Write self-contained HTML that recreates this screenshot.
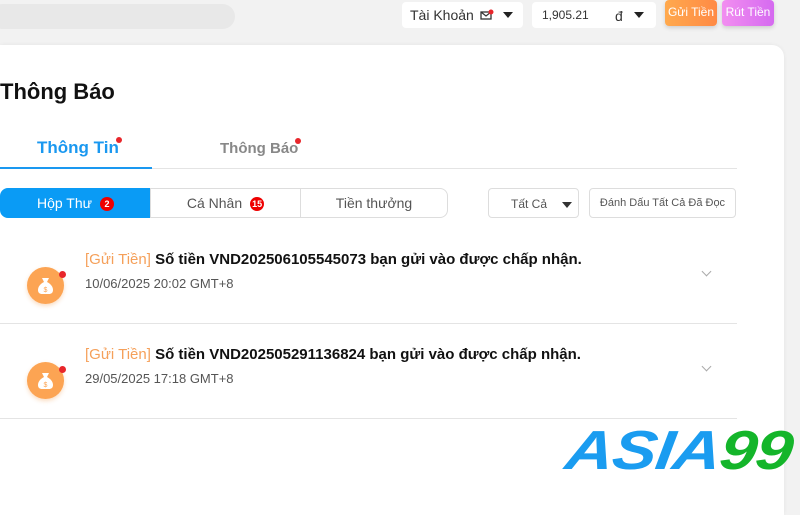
<!DOCTYPE html>
<html><head><meta charset="utf-8"><style>
*{margin:0;padding:0;box-sizing:border-box}
body{width:800px;height:500px;overflow:hidden;background:#f2f2f2;font-family:"Liberation Sans",sans-serif;position:relative;color:#222}
.abs{position:absolute}
.search{left:-10px;top:4px;width:245px;height:25px;border-radius:13px;background:#e8e8e8}
.box{background:#fff;border-radius:4px;height:26px;top:2px}
.btn{top:0;height:26px;border-radius:4px;color:#fff;font-size:12px;text-align:center;line-height:24px;box-shadow:0 2px 4px rgba(0,0,0,.15)}
.card{left:0;top:45px;width:784px;height:470px;background:#fff;border-top-right-radius:12px;box-shadow:0 0 4px rgba(0,0,0,.06)}
.tri{display:inline-block;width:0;height:0;border-left:5px solid transparent;border-right:5px solid transparent;border-top:6px solid #222}
.dot{width:6px;height:6px;border-radius:50%;background:#e8262b}
.seg{top:188px;height:30px;font-size:14px;line-height:29px;text-align:center;color:#555;border:1px solid #ddd}
.badge{display:inline-block;width:14px;height:14px;border-radius:50%;background:#e00;color:#fff;font-size:9px;line-height:14px;text-align:center;font-weight:bold;vertical-align:1px;margin-left:8px}
.row{left:0;width:737px;border-bottom:1px solid #e4e4e4}
.title{left:85px;font-size:15px;font-weight:bold;color:#111;white-space:nowrap;letter-spacing:0}
.title span{color:#f5a05a;font-weight:normal}
.date{left:85px;font-size:13px;color:#555}
.ic{left:27px;width:37px;height:37px;border-radius:50%;background:#fca453;box-shadow:0 2px 4px rgba(240,140,50,.3)}
.chev{left:703px;width:7px;height:7px;border-right:1px solid #aaa;border-bottom:1px solid #aaa;transform:rotate(45deg)}
</style></head><body>
<div class="abs search"></div>
<div class="abs box" style="left:402px;width:121px"><span class="abs" style="left:8px;top:5px;font-size:14px;color:#333">Tài Khoản</span>
<svg class="abs" style="left:78px;top:7px" width="14" height="12"><rect x="1" y="3" width="10" height="7" fill="none" stroke="#333" stroke-width="1.3"/><path d="M1 3l5 4 5-4" fill="none" stroke="#333" stroke-width="1.2"/><circle cx="11" cy="3" r="2.5" fill="#e8262b"/></svg>
<span class="abs tri" style="left:101px;top:10px"></span></div>
<div class="abs box" style="left:532px;width:124px"><span class="abs" style="left:10px;top:6px;font-size:12px;color:#333">1,905.21</span><span class="abs" style="left:83px;top:6px;font-size:14px;color:#333">đ</span><span class="abs tri" style="left:102px;top:10px"></span></div>
<div class="abs btn" style="left:665px;width:52px;background:linear-gradient(90deg,#ffa94d,#ff8a45)">Gửi Tiền</div>
<div class="abs btn" style="left:722px;width:52px;background:linear-gradient(90deg,#f28ef0,#d56af0)">Rút Tiền</div>
<div class="abs card"></div>
<div class="abs" style="left:0;top:79px;font-size:22px;font-weight:bold;color:#111">Thông Báo</div>
<div class="abs" style="left:37px;top:138px;font-size:17px;font-weight:bold;color:#1a98f0">Thông Tin</div>
<div class="abs dot" style="left:116px;top:137px"></div>
<div class="abs" style="left:220px;top:140px;font-size:15px;font-weight:bold;color:#888">Thông Báo</div>
<div class="abs dot" style="left:295px;top:138px"></div>
<div class="abs" style="left:0;top:168px;width:737px;height:1px;background:#e4e4e4"></div>
<div class="abs" style="left:0;top:167px;width:152px;height:2px;background:#1a98f0"></div>
<div class="abs seg" style="left:0;width:151px;background:#0a9bf5;border-color:#0a9bf5;color:#fff;border-radius:8px 0 0 8px">Hộp Thư<span class="badge">2</span></div>
<div class="abs seg" style="left:150px;width:151px">Cá Nhân<span class="badge">15</span></div>
<div class="abs seg" style="left:300px;width:148px;border-radius:0 8px 8px 0">Tiền thưởng</div>
<div class="abs" style="left:488px;top:188px;width:91px;height:30px;border:1px solid #ddd;border-radius:4px;font-size:12px;color:#555"><span class="abs" style="left:22px;top:8px">Tất Cả</span><span class="abs tri" style="left:73px;top:13px;border-top-color:#333"></span></div>
<div class="abs" style="left:589px;top:188px;width:147px;height:30px;border:1px solid #ddd;border-radius:4px;font-size:11px;color:#555;text-align:center;line-height:28px">Đánh Dấu Tất Cả Đã Đọc</div>

<div class="abs row" style="top:227px;height:97px"></div>
<div class="abs title" style="top:251px"><span>[Gửi Tiền]</span> Số tiền VND202506105545073 bạn gửi vào được chấp nhận.</div>
<div class="abs date" style="top:276px">10/06/2025 20:02 GMT+8</div>
<div class="abs ic" style="top:267px"></div>
<div class="abs dot" style="left:59px;top:271px;width:7px;height:7px"></div>
<div class="abs chev" style="top:268px"></div>

<div class="abs row" style="top:324px;height:95px"></div>
<div class="abs title" style="top:346px"><span>[Gửi Tiền]</span> Số tiền VND202505291136824 bạn gửi vào được chấp nhận.</div>
<div class="abs date" style="top:371px">29/05/2025 17:18 GMT+8</div>
<div class="abs ic" style="top:362px"></div>
<div class="abs dot" style="left:59px;top:366px;width:7px;height:7px"></div>
<div class="abs chev" style="top:363px"></div>

<svg class="abs" style="left:27px;top:267px" width="37" height="37"><path d="M15 11h7l-2 4c4 2 6 5 6 8 0 3-2 4-4 4h-7c-2 0-4-1-4-4 0-3 2-6 6-8z" fill="#fff"/><text x="18.5" y="25" font-size="7" text-anchor="middle" fill="#fca453" font-family="Liberation Sans">$</text></svg>
<svg class="abs" style="left:27px;top:362px" width="37" height="37"><path d="M15 11h7l-2 4c4 2 6 5 6 8 0 3-2 4-4 4h-7c-2 0-4-1-4-4 0-3 2-6 6-8z" fill="#fff"/><text x="18.5" y="25" font-size="7" text-anchor="middle" fill="#fca453" font-family="Liberation Sans">$</text></svg>

<div class="abs" style="left:570px;top:423px;font-size:55px;font-weight:900;font-style:italic;letter-spacing:-1px;line-height:55px;white-space:nowrap;transform-origin:0 0;transform:skewX(-8deg) scaleX(1.21)"><span style="color:#1a9cf0">ASIA</span><span style="color:#14b52a">99</span></div>
</body></html>
